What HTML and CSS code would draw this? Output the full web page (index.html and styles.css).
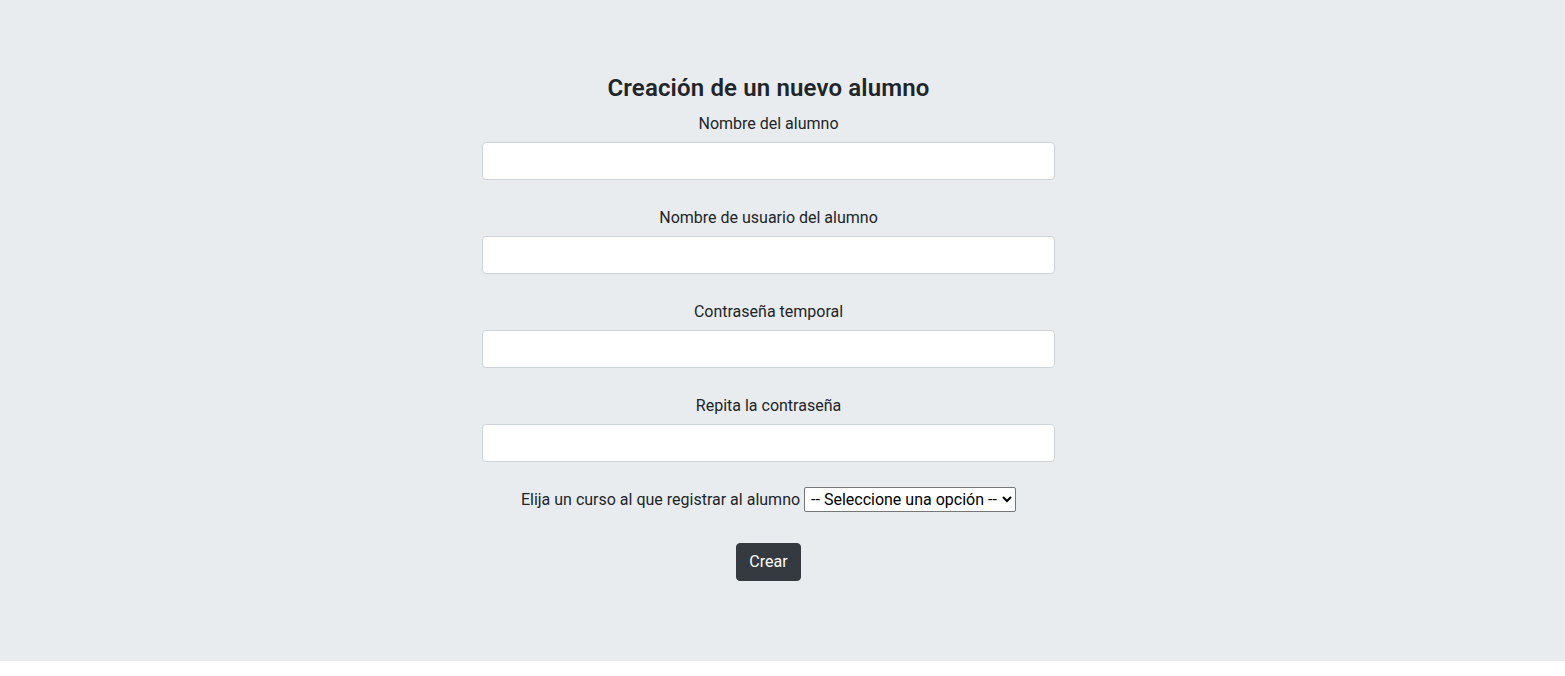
FILE: index.html
```html
<!DOCTYPE html>
<html lang="es">
<head>
<meta charset="utf-8">
<title>Creación de un nuevo alumno</title>
<link rel="stylesheet" href="styles.css">
</head>
<body>
<div class="jumbotron">
  <form class="form">
    <h4 class="title">Creación de un nuevo alumno</h4>
    <div class="group">
      <label class="label" for="nombre">Nombre del alumno</label>
      <input class="control" id="nombre" type="text">
    </div>
    <div class="group">
      <label class="label" for="usuario">Nombre de usuario del alumno</label>
      <input class="control" id="usuario" type="text">
    </div>
    <div class="group">
      <label class="label" for="pass">Contraseña temporal</label>
      <input class="control" id="pass" type="password">
    </div>
    <div class="group">
      <label class="label" for="pass2">Repita la contraseña</label>
      <input class="control" id="pass2" type="password">
    </div>
    <div class="course">
      <label class="course-label" for="curso">Elija un curso al que registrar al alumno</label>
      <select class="select" id="curso">
        <option>-- Seleccione una opción --</option>
      </select>
    </div>
    <div class="actions">
      <button class="btn" type="submit">Crear</button>
    </div>
  </form>
</div>
</body>
</html>
```

FILE: styles.css
```css
html, body {
  margin: 0;
  padding: 0;
  background: #fff;
}
body {
  font-family: Roboto, "Liberation Sans", sans-serif;
  font-size: 16px;
  line-height: 1.5;
  color: #212529;
}
.jumbotron {
  background: #e9ecef;
  padding: 74px 28px 64px 0;
  display: flex;
  justify-content: center;
}
.form {
  width: 573px;
  display: flex;
  flex-direction: column;
  align-items: center;
  margin-bottom: 16px;
}
.title {
  margin: 0 0 7px;
  font-size: 24px;
  font-weight: 600;
  line-height: 1.2;
  text-align: center;
  letter-spacing: 0.15px;
}
.group {
  width: 100%;
  display: flex;
  flex-direction: column;
  align-items: center;
  margin-bottom: 24px;
}
.label {
  display: block;
  padding-top: 2px;
  margin-bottom: 6px;
  text-align: center;
}
.control {
  box-sizing: border-box;
  width: 100%;
  height: 38px;
  border: 1px solid #ced4da;
  border-radius: 4px;
  background: #fff;
  font: inherit;
  padding: 6px 12px;
}
.course {
  display: flex;
  align-items: center;
  gap: 4px;
  height: 24px;
  margin-top: 2px;
  margin-bottom: 31px;
}
.select {
  font: inherit;
  font-size: 16px;
  height: 25px;
  border: 1px solid #767676;
  border-radius: 2px;
  background: #fff;
  color: #000;
  padding: 0 2px;
}
.btn {
  height: 38px;
  padding: 6px 12px;
  border: 1px solid #343a40;
  border-radius: 4px;
  background: #343a40;
  color: #fff;
  font: inherit;
}
```
